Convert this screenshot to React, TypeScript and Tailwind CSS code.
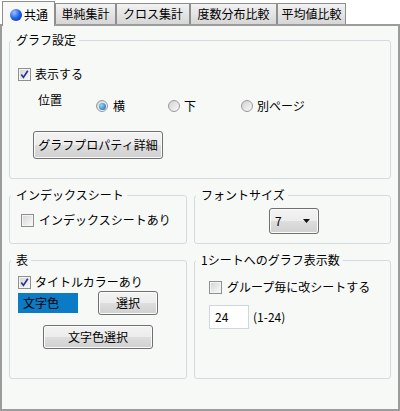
import type { ReactNode } from 'react'

const Check = ({ checked }: { checked?: boolean }) => (
  <span className="flex h-[13px] w-[13px] shrink-0 items-center justify-center border border-[#8e8f8f] bg-linear-to-br from-[#d4d4d4] to-[#fbfbfb] shadow-[inset_0_0_0_1px_#f4f4f4]">
    {checked && (
      <svg width="9" height="9" viewBox="0 0 9 9">
        <path d="M1.3 4.6 L3.4 7.4 L7.8 0.8" stroke="#2a3590" strokeWidth="1.7" fill="none" />
      </svg>
    )}
  </span>
)

const Radio = ({ on }: { on?: boolean }) => (
  <span className="flex h-[12px] w-[12px] shrink-0 items-center justify-center rounded-full border border-[#9a9a9a] bg-linear-to-br from-[#d2d2d2] to-[#fafafa]">
    {on && <span className="h-[7px] w-[7px] rounded-full bg-radial-[at_35%_35%] from-[#8fd8ff] to-[#0b5ea6]" />}
  </span>
)

const Btn = ({ label, className }: { label: string; className: string }) => (
  <button className={`flex items-center justify-center rounded-[3px] border border-[#707070] bg-[linear-gradient(#f3f3f3_0%,#ececec_50%,#dedede_50%,#d0d0d0_100%)] leading-[16px] shadow-[inset_0_0_0_1px_#fbfbfb] ${className}`}>
    {label}
  </button>
)

const Group = ({ title, className, children }: { title: string; className: string; children: ReactNode }) => (
  <fieldset className={`rounded-[3px] border border-[#d3dae2] ${className}`}>
    <legend className="ml-[1px] pl-[5px] pr-[3px] leading-[16px]">{title}</legend>
    {children}
  </fieldset>
)

const tabs = [
  { label: '単純集計', w: 'w-[61px]' },
  { label: 'クロス集計', w: 'w-[74px]' },
  { label: '度数分布比較', w: 'w-[87px]' },
  { label: '平均値比較', w: 'w-[69px]' },
]

export default function App() {
  return (
    <div className="flex h-[411px] w-[400px] flex-col bg-white font-['Noto_Sans_CJK_JP','Noto_Sans',sans-serif] text-[12px] text-black">
      {/* tabs */}
      <div className="flex h-[24px] shrink-0 items-end pl-[2px]">
        <div className="relative z-10 -mb-[2px] flex h-[25px] w-[53px] items-start gap-[2px] border border-b-0 border-[#8e8e8e] bg-[#f7f9f7] pl-[7px] pt-[5px] leading-[16px]">
          <span className="mt-[2px] h-[12px] w-[12px] rounded-full bg-radial-[at_35%_30%] from-[#9cc4ff] via-[#1f5fe6] to-[#0a2a96]" />
          <span>共通</span>
        </div>
        {tabs.map((t) => (
          <div
            key={t.label}
            className={`flex h-[21px] items-center justify-center border border-b-0 border-[#8e8e8e] bg-linear-to-b from-[#f2f2f2] to-[#d6d6d6] leading-[16px] ${t.w}`}
          >
            {t.label}
          </div>
        ))}
      </div>

      {/* panel */}
      <div className="flex-1 border-2 border-[#9c9c9c] bg-[#f7f9f7] px-[7px] pt-[6px]">
        <Group title="グラフ設定" className="h-[147px]">
          <div className="flex items-center gap-[4px] pl-[8px] pt-[18px] leading-[16px]">
            <Check checked />
            <span>表示する</span>
          </div>
          <div className="mt-[10px] flex items-start pl-[28px] leading-[16px]">
            <span className="w-[58px]">位置</span>
            <div className="mt-[6px] flex">
              <label className="flex w-[72px] items-center gap-[5px]">
                <Radio on />
                <span>横</span>
              </label>
              <label className="flex w-[73px] items-center gap-[4px]">
                <Radio />
                <span>下</span>
              </label>
              <label className="flex items-center gap-[4px]">
                <Radio />
                <span>別ページ</span>
              </label>
            </div>
          </div>
          <Btn label="グラフプロパティ詳細" className="ml-[23px] mt-[17px] h-[28px] w-[130px]" />
        </Group>

        <div className="mt-[8px] grid grid-cols-[178px_1fr] gap-x-[7px] gap-y-[8px]">
          <Group title="インデックスシート" className="h-[57px]">
            <div className="mt-[9px] flex items-center gap-[5px] pl-[11px] leading-[16px]">
              <Check />
              <span>インデックスシートあり</span>
            </div>
          </Group>

          <Group title="フォントサイズ" className="h-[57px]">
            <div className="ml-[74px] mt-[5px] flex h-[26px] w-[50px] items-center justify-between rounded-[3px] border border-[#707070] bg-[linear-gradient(#f3f3f3_0%,#ececec_50%,#dedede_50%,#d0d0d0_100%)] pl-[5px] pr-[8px] leading-[16px] shadow-[inset_0_0_0_1px_#fbfbfb]">
              <span>7</span>
              <svg width="7" height="4" viewBox="0 0 7 4">
                <path d="M0 0 H7 L3.5 4 Z" fill="#111" />
              </svg>
            </div>
          </Group>

          <Group title="表" className="h-[127px]">
            <div className="mt-[6px] flex items-center gap-[4px] pl-[8px] leading-[16px]">
              <Check checked />
              <span>タイトルカラーあり</span>
            </div>
            <div className="mt-[1px] flex items-center pl-[8px]">
              <div className="h-[20px] w-[60px] bg-[#0a7bc4] pl-[5px] leading-[20px]">文字色</div>
              <Btn label="選択" className="ml-[20px] h-[24px] w-[60px]" />
            </div>
            <Btn label="文字色選択" className="ml-[33px] mt-[10px] h-[24px] w-[110px]" />
          </Group>

          <Group title="1シートへのグラフ表示数" className="h-[127px]">
            <div className="mt-[11px] flex items-center gap-[5px] pl-[14px] leading-[16px]">
              <Check />
              <span>グループ毎に改シートする</span>
            </div>
            <div className="mt-[10px] flex items-center gap-[4px] pl-[14px] leading-[16px]">
              <div className="flex h-[24px] w-[40px] items-center border border-[#cfd6de] bg-white pl-[5px]">24</div>
              <span>(1-24)</span>
            </div>
          </Group>
        </div>
      </div>
    </div>
  )
}
